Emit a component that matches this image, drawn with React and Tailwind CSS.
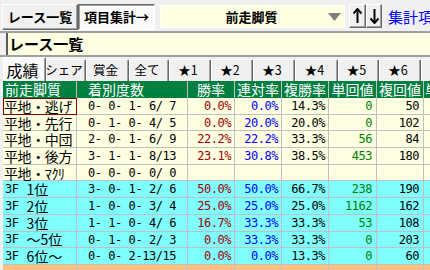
import React from "react";

const yellowRows = [
  { name: "平地・逃げ", cnt: "0- 0- 1- 6/ 7", win: "0.0%", ren: "0.0%", fuku: "14.3%", tan: "0", fk: "50", sel: true },
  { name: "平地・先行", cnt: "0- 1- 0- 4/ 5", win: "0.0%", ren: "20.0%", fuku: "20.0%", tan: "0", fk: "102" },
  { name: "平地・中団", cnt: "2- 0- 1- 6/ 9", win: "22.2%", ren: "22.2%", fuku: "33.3%", tan: "56", fk: "84" },
  { name: "平地・後方", cnt: "3- 1- 1- 8/13", win: "23.1%", ren: "30.8%", fuku: "38.5%", tan: "453", fk: "180" },
  { name: "平地・ﾏｸﾘ", cnt: "0- 0- 0- 0/ 0", win: "", ren: "", fuku: "", tan: "", fk: "" },
];

const cyanRows = [
  { pos: "1位", cnt: "3- 0- 1- 2/ 6", win: "50.0%", ren: "50.0%", fuku: "66.7%", tan: "238", fk: "190" },
  { pos: "2位", cnt: "1- 0- 0- 3/ 4", win: "25.0%", ren: "25.0%", fuku: "25.0%", tan: "1162", fk: "162" },
  { pos: "3位", cnt: "1- 1- 0- 4/ 6", win: "16.7%", ren: "33.3%", fuku: "33.3%", tan: "53", fk: "108" },
  { pos: "～5位", cnt: "0- 1- 0- 2/ 3", win: "0.0%", ren: "33.3%", fuku: "33.3%", tan: "0", fk: "203" },
  { pos: "6位～", cnt: "0- 0- 2-13/15", win: "0.0%", ren: "0.0%", fuku: "13.3%", tan: "0", fk: "60" },
];

const tabs = [
  { label: "成績", w: "w-[43px]", active: true },
  { label: "シェア", w: "w-[40px]" },
  { label: "賞金", w: "w-[43px]" },
  { label: "全て", w: "w-[40px]" },
  { label: "★1", w: "w-[42px]" },
  { label: "★2", w: "w-[42px]" },
  { label: "★3", w: "w-[42px]" },
  { label: "★4", w: "w-[43px]" },
  { label: "★5", w: "w-[41px]" },
  { label: "★6", w: "w-[42px]" },
  { label: "★7", w: "w-[42px]" },
];

const mono = "font-['DejaVu_Sans_Mono',monospace] text-[12px] tracking-[-0.45px]";
const cell = "border-r border-b border-[#c0c0c0] h-[16.7px] leading-[16px] whitespace-pre";

function DataCells({ r }) {
  return (
    <>
      <div className={`${cell} ${mono} text-center`}>{r.cnt}</div>
      <div className={`${cell} ${mono} text-right pr-[3px] text-[#a00000]`}>{r.win}</div>
      <div className={`${cell} ${mono} text-right pr-[3px] text-[#0000ff]`}>{r.ren}</div>
      <div className={`${cell} ${mono} text-right pr-[3px]`}>{r.fuku}</div>
      <div className={`${cell} ${mono} text-right pr-[4px] text-[#008000]`}>{r.tan}</div>
      <div className={`${cell} ${mono} text-right pr-[4px]`}>{r.fk}</div>
      <div className={cell}></div>
    </>
  );
}

function RaisedButton({ className, children }) {
  return (
    <div
      className={`flex items-center justify-center border border-t-white border-l-white border-b-[#696969] border-r-[#696969] shadow-[inset_-1px_-1px_#a0a0a0] bg-[#f0f0f0] ${className}`}
    >
      {children}
    </div>
  );
}

export default function App() {
  return (
    <div className="w-[430px] h-[270px] overflow-hidden bg-[#f0f0f0] text-black font-['Noto_Sans_CJK_JP',sans-serif]">
      {/* top bar */}
      <div className="h-[31px] flex items-start pt-[4px] pl-[2px] whitespace-nowrap">
        <RaisedButton className="w-[76px] h-[26px] shrink-0 text-[13px] font-bold">レース一覧</RaisedButton>
        <div className="w-[77px] h-[26px] shrink-0 flex items-center justify-center border border-t-[#696969] border-l-[#696969] border-b-white border-r-white shadow-[inset_1px_1px_#a0a0a0] bg-[#fbfbfb] text-[13px] font-bold">
          項目集計→
        </div>
        <div className="ml-[5px] mt-[1px] w-[185px] h-[23px] shrink-0 flex items-center bg-[#ffffe1] border border-white">
          <span className="flex-1 text-center pl-[14px] text-[13px] font-bold">前走脚質</span>
          <svg width="13" height="8" viewBox="0 0 13 8" className="mr-[3px]">
            <polygon points="0,0 13,0 6.5,8" fill="#808080" />
          </svg>
        </div>
        <RaisedButton className="ml-[4px] w-[17px] h-[24px] shrink-0">
          <svg width="9" height="16" viewBox="0 0 9 16">
            <path d="M4.5 1 L4.5 15" stroke="#000" strokeWidth="2" />
            <path d="M0.5 5.5 L4.5 1 L8.5 5.5" stroke="#000" strokeWidth="2" fill="none" />
          </svg>
        </RaisedButton>
        <RaisedButton className="w-[16px] h-[24px] shrink-0">
          <svg width="9" height="16" viewBox="0 0 9 16">
            <path d="M4.5 1 L4.5 15" stroke="#000" strokeWidth="2" />
            <path d="M0.5 10.5 L4.5 15 L8.5 10.5" stroke="#000" strokeWidth="2" fill="none" />
          </svg>
        </RaisedButton>
        <span className="ml-[6px] mt-[2px] text-[15px] text-[#0000ff]">集計項目</span>
      </div>

      {/* title box */}
      <div className="h-[26px] border-t-2 border-b-2 border-[#a0a0a0] pl-[6px]">
        <div className="h-full bg-[#ffffe1] border-l-2 border-[#5a5a5a] pl-[1px] text-[15px] font-bold leading-[22px]">
          レース一覧
        </div>
      </div>

      {/* tabs */}
      <div className="h-[24px] flex items-end pl-[3px] whitespace-nowrap">
        {tabs.map((t) => (
          <div
            key={t.label}
            className={`${t.w} shrink-0 flex items-center justify-center pr-[4px] rounded-t-[2px] border-t border-l border-t-white border-l-white border-r border-r-[#696969] shadow-[inset_-1px_0_#a0a0a0] ${
              t.active ? "h-[24px] bg-[#fafafa] text-[16px]" : "h-[22px] bg-[#f0f0f0] text-[12.5px]"
            }`}
          >
            {t.label}
          </div>
        ))}
      </div>

      {/* grid */}
      <div className="ml-[3px] grid grid-cols-[74px_111px_47px_47px_47px_48px_47px_60px] w-[481px]">
        {/* header */}
        {[
          ["前走脚質", "text-left pl-[2px]"],
          ["着別度数", "text-left pl-[11px]"],
          ["勝率", "text-center"],
          ["連対率", "text-center"],
          ["複勝率", "text-center"],
          ["単回値", "text-center"],
          ["複回値", "text-center"],
          ["単回値", "text-left pl-[1px]"],
        ].map(([h, a], i) => (
          <div
            key={i}
            className={`h-[17px] bg-[#008040] text-white text-[14px] leading-[17px] border-r border-[#c0c0c0] whitespace-nowrap ${a}`}
          >
            {h}
          </div>
        ))}

        {yellowRows.map((r) => (
          <React.Fragment key={r.name}>
            <div
              className={`${cell} bg-[#ffffe1] text-[14px] pl-[1px] tracking-[-0.4px] ${
                r.sel ? "outline outline-1 outline-[#800000] -outline-offset-1" : ""
              }`}
            >
              {r.name}
            </div>
            <div className="contents [&>div]:bg-[#ffffe1]">
              <DataCells r={r} />
            </div>
          </React.Fragment>
        ))}

        {cyanRows.map((r) => (
          <React.Fragment key={r.pos}>
            <div className={`${cell} bg-[#80ffff] flex items-center pl-[2px]`}>
              <span className={`${mono} leading-[16px]`}>3F</span>
              <span className="ml-[8px] text-[14px] leading-[16px]">{r.pos}</span>
            </div>
            <div className="contents [&>div]:bg-[#80ffff]">
              <DataCells r={r} />
            </div>
          </React.Fragment>
        ))}

        {Array.from({ length: 8 }).map((_, i) => (
          <div key={i} className="h-[16px] bg-[#ffc080] border-r border-[#c0c0c0]"></div>
        ))}
      </div>
    </div>
  );
}
